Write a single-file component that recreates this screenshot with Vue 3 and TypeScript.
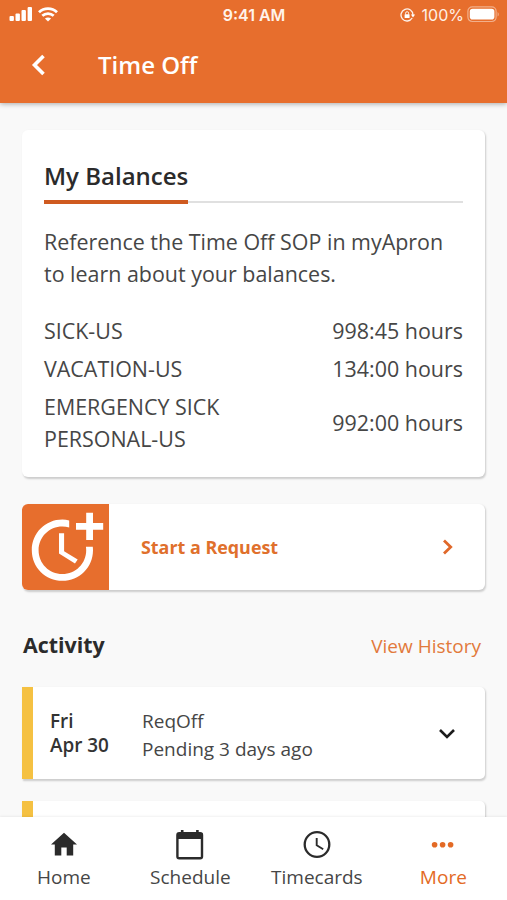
<script setup lang="ts">
interface Balance {
  name: string
  hours: string
}

interface Tab {
  id: 'home' | 'schedule' | 'timecards' | 'more'
  label: string
}

const balances: Balance[] = [
  { name: 'SICK-US', hours: '998:45 hours' },
  { name: 'VACATION-US', hours: '134:00 hours' },
  { name: 'EMERGENCY SICK PERSONAL-US', hours: '992:00 hours' },
]

const tabs: Tab[] = [
  { id: 'home', label: 'Home' },
  { id: 'schedule', label: 'Schedule' },
  { id: 'timecards', label: 'Timecards' },
  { id: 'more', label: 'More' },
]
</script>

<template>
  <div class="screen">
    <header class="header">
      <div class="status">
        <div class="status-side">
          <svg class="signal" width="24" height="16" viewBox="0 0 24 16" fill="#fff">
            <rect x=".5" y="10" width="4.4" height="5" rx="1" />
            <rect x="6.5" y="7.5" width="4.4" height="7.5" rx="1" />
            <rect x="12.5" y="4" width="4.4" height="11" rx="1" />
            <rect x="18.6" y="1" width="4.4" height="14" rx="1" />
          </svg>
          <svg class="wifi" width="20" height="15" viewBox="0 0 20 15" fill="none" stroke="#fff" stroke-width="2.8">
            <path d="M1 5.2C6 0.3 14 0.3 19 5.2" />
            <path d="M4.3 8.8C7.6 5.8 12.4 5.8 15.7 8.8" />
            <path d="M10 14.6L6.9 11.5C8.6 10 11.4 10 13.1 11.5Z" fill="#fff" stroke="none" />
          </svg>
        </div>
        <div class="clock">9:41 AM</div>
        <div class="status-side right">
          <svg width="16" height="14" viewBox="0 0 16 14" fill="none" stroke="#fff" stroke-opacity=".9" stroke-width="1.3">
            <path d="M12.2 10A6 6 0 1 1 13 7" />
            <path d="M10.9 6.4h4.2L13 9.4z" fill="#fff" stroke="none" />
            <rect x="4.6" y="6.2" width="5" height="3.8" rx=".6" fill="#fff" stroke="none" />
            <path d="M5.6 6.5V5.2a1.5 1.5 0 0 1 3 0v1.3" stroke-width="1" />
          </svg>
          <span class="percent">100%</span>
          <svg class="battery" width="33" height="17" viewBox="0 0 33 17">
            <rect x=".9" y=".9" width="28.2" height="14.6" rx="4.4" fill="none" stroke="#fff" stroke-opacity=".45" stroke-width="1.2" />
            <rect x="2.8" y="2.8" width="24.6" height="10.8" rx="2.8" fill="#fff" />
            <path d="M30.6 6v4.6c1.6-.8 1.6-3.8 0-4.6z" fill="#fff" fill-opacity=".45" />
          </svg>
        </div>
      </div>
      <div class="titlebar">
        <svg class="back" width="14" height="22" viewBox="0 0 14 22" fill="none" stroke="#fff" stroke-width="3.6">
          <path d="M12.5 2L3.5 11L12.5 20" />
        </svg>
        <h1>Time Off</h1>
      </div>
    </header>

    <main class="content">
      <section class="card balances">
        <div class="card-head">
          <h2>My Balances</h2>
        </div>
        <p class="note">Reference the Time Off SOP in myApron<br />to learn about your balances.</p>
        <div class="rows">
          <div v-for="b in balances" :key="b.name" class="row">
            <span class="name">{{ b.name }}</span>
            <span class="hours">{{ b.hours }}</span>
          </div>
        </div>
      </section>

      <button class="card request" type="button">
        <span class="request-icon">
          <svg width="81.6" height="81.6" viewBox="0 0 24 24" fill="#fff">
            <path d="M10 8v6l4.7 2.9.8-1.2-4-2.4V8z" />
            <path d="M17.92 12c.05.33.08.66.08 1 0 3.9-3.1 7-7 7s-7-3.1-7-7 3.1-7 7-7c.7 0 1.37.1 2 .29V4.23C12.36 4.08 11.69 4 11 4c-5 0-9 4-9 9s4 9 9 9 9-4 9-9c0-.34-.02-.67-.06-1z" />
            <path d="M20 5V2h-2v3h-3v2h3v3h2V7h3V5z" />
          </svg>
        </span>
        <span class="request-label">Start a Request</span>
        <svg class="chev-right" width="12" height="16" viewBox="0 0 12 16" fill="none" stroke="#e0682a" stroke-width="2.8">
          <path d="M2 1.5L8.7 8L2 14.5" />
        </svg>
      </button>

      <div class="section-head">
        <h3>Activity</h3>
        <a class="history">View History</a>
      </div>

      <article class="card activity">
        <div class="date">Fri<br />Apr 30</div>
        <div class="detail">ReqOff<br />Pending 3 days ago</div>
        <svg class="chev-down" width="18" height="12" viewBox="0 0 18 12" fill="none" stroke="#1c1c1c" stroke-width="2.6">
          <path d="M2 2L9 9L16 2" />
        </svg>
      </article>
      <article class="card activity"></article>
    </main>

    <nav class="tabs">
      <div v-for="t in tabs" :key="t.id" class="tab" :class="[t.id, { active: t.id === 'more' }]">
        <svg v-if="t.id === 'home'" width="32" height="32" viewBox="0 0 32 32" fill="#2b2b2b">
          <path d="M16 4.7L3 16.6h3.8v11h6.5v-8.2h5.4v8.2h6.5v-11H29z" />
        </svg>
        <svg v-else-if="t.id === 'schedule'" width="32" height="32" viewBox="0 0 32 32">
          <rect x="3.4" y="5.1" width="24.6" height="25.2" rx="1.8" fill="none" stroke="#2b2b2b" stroke-width="2.4" />
          <path d="M3 5h25.5v6H3zM6.9 2h2.6v4H6.9zM22.1 2h2.6v4h-2.6z" fill="#2b2b2b" />
        </svg>
        <svg v-else-if="t.id === 'timecards'" width="32" height="32" viewBox="0 0 32 32" fill="none" stroke="#2b2b2b" stroke-width="2.3">
          <circle cx="16" cy="16.5" r="12.3" />
          <path d="M15.7 10v7.3l6.5 4" stroke-width="1.9" />
        </svg>
        <svg v-else width="32" height="32" viewBox="0 0 32 32" fill="#e36a25">
          <circle cx="7.6" cy="16.8" r="2.8" />
          <circle cx="15.6" cy="16.8" r="2.8" />
          <circle cx="23.6" cy="16.8" r="2.8" />
        </svg>
        <span>{{ t.label }}</span>
      </div>
    </nav>
  </div>
</template>

<style>
body {
  margin: 0;
  background: #f9f9f9;
}
</style>

<style scoped>
.screen {
  display: flex;
  flex-direction: column;
  height: 900px;
  overflow: hidden;
  background: #f9f9f9;
  font-family: 'Open Sans', 'Noto Sans', sans-serif;
  color: #464646;
}
h1,
h2,
h3,
p {
  margin: 0;
}
svg {
  display: block;
  flex: none;
}
.header {
  flex: none;
  height: 103px;
  background: #e76e2d;
  color: #fff;
  box-shadow: 0 1px 5px rgba(0, 0, 0, 0.32);
  z-index: 1;
}
.status {
  display: grid;
  grid-template-columns: 1fr auto 1fr;
  align-items: center;
  height: 30px;
  padding: 0 7px 0 9px;
  font-family: Inter, sans-serif;
  font-size: 16px;
}
.status-side {
  display: flex;
  align-items: center;
  gap: 5px;
}
.status-side.right {
  justify-content: flex-end;
  gap: 6px;
}
.signal {
  margin-top: -2px;
}
.wifi {
  margin-top: -1px;
}
.battery {
  margin: -2px 0 0 -3px;
}
.clock {
  margin-right: 1px;
  font-weight: 600;
  font-size: 16px;
  color: #fff3ea;
}
.percent {
  color: #fff0e6;
}
.titlebar {
  display: flex;
  align-items: center;
  height: 70px;
  padding-left: 31px;
}
h1 {
  margin-left: 53px;
  font-size: 24px;
  font-weight: 600;
  line-height: 32px;
}
.content {
  flex: 1;
  min-height: 0;
  overflow: hidden;
  padding: 27px 22px 0 22px;
}
.card {
  box-sizing: border-box;
  background: #fff;
  border-radius: 6px;
  box-shadow: 1px 1.5px 2px rgba(0, 0, 0, 0.18);
}
.balances {
  height: 347px;
  padding: 27px 22px 0;
}
.card-head {
  display: flex;
  height: 47px;
  box-shadow: inset 0 -1px #fff, inset 0 -3px #e0e0e0;
}
h2 {
  box-sizing: border-box;
  height: 47px;
  border-bottom: 4px solid #cf5a20;
  padding-top: 3px;
  font-size: 24px;
  font-weight: 600;
  line-height: 32px;
  color: #2b2b2b;
  white-space: nowrap;
}
.note {
  margin-top: 22px;
  font-size: 21.45px;
  line-height: 32px;
  white-space: nowrap;
}
.rows {
  display: flex;
  flex-direction: column;
  gap: 6px;
  margin-top: 25px;
  font-size: 21.45px;
  line-height: 32px;
}
.row {
  display: flex;
  align-items: center;
  justify-content: space-between;
}
.name {
  width: 220px;
}
.hours {
  white-space: nowrap;
}
.request {
  display: flex;
  align-items: center;
  width: 100%;
  height: 86px;
  margin-top: 27px;
  border: 0;
  padding: 0;
  overflow: hidden;
  font-family: inherit;
}
.request-icon {
  display: flex;
  align-items: center;
  justify-content: center;
  width: 87px;
  height: 86px;
  background: #e76e2d;
}
.request-label {
  margin-left: 32px;
  font-size: 17.9px;
  font-weight: 700;
  color: #e0702c;
}
.chev-right {
  margin-left: auto;
  margin-right: 31px;
}
.section-head {
  display: flex;
  align-items: center;
  justify-content: space-between;
  box-sizing: border-box;
  height: 97px;
  padding: 14px 4px 0 1px;
}
h3 {
  margin-top: -2px;
  font-size: 21.4px;
  font-weight: 700;
  line-height: 30px;
  color: #2b2b2b;
}
.history {
  font-size: 19px;
  color: #e2793c;
}
.activity {
  display: flex;
  align-items: center;
  height: 92px;
  margin-bottom: 22px;
  border-left: 11px solid #f5c142;
  border-radius: 0 5px 5px 0;
}
.date {
  width: 76px;
  padding: 0 0 0 17px;
  font-size: 18.9px;
  font-weight: 600;
  line-height: 24px;
  color: #333;
}
.detail {
  margin-left: 16px;
  padding-top: 4px;
  font-size: 19px;
  line-height: 28px;
  white-space: nowrap;
}
.chev-down {
  margin-top: 2px;
  margin-left: auto;
  margin-right: 29px;
}
.tabs {
  display: grid;
  grid-template-columns: repeat(4, 126.5px);
  flex: none;
  box-sizing: border-box;
  height: 83px;
  padding-left: 0.6px;
  background: #fff;
  box-shadow: 0 -1px 2px rgba(0, 0, 0, 0.06);
  z-index: 1;
}
.tab {
  display: flex;
  flex-direction: column;
  align-items: center;
  padding-top: 11px;
  font-size: 19px;
  line-height: 34px;
}
.tab.active {
  color: #e36a25;
}
</style>
